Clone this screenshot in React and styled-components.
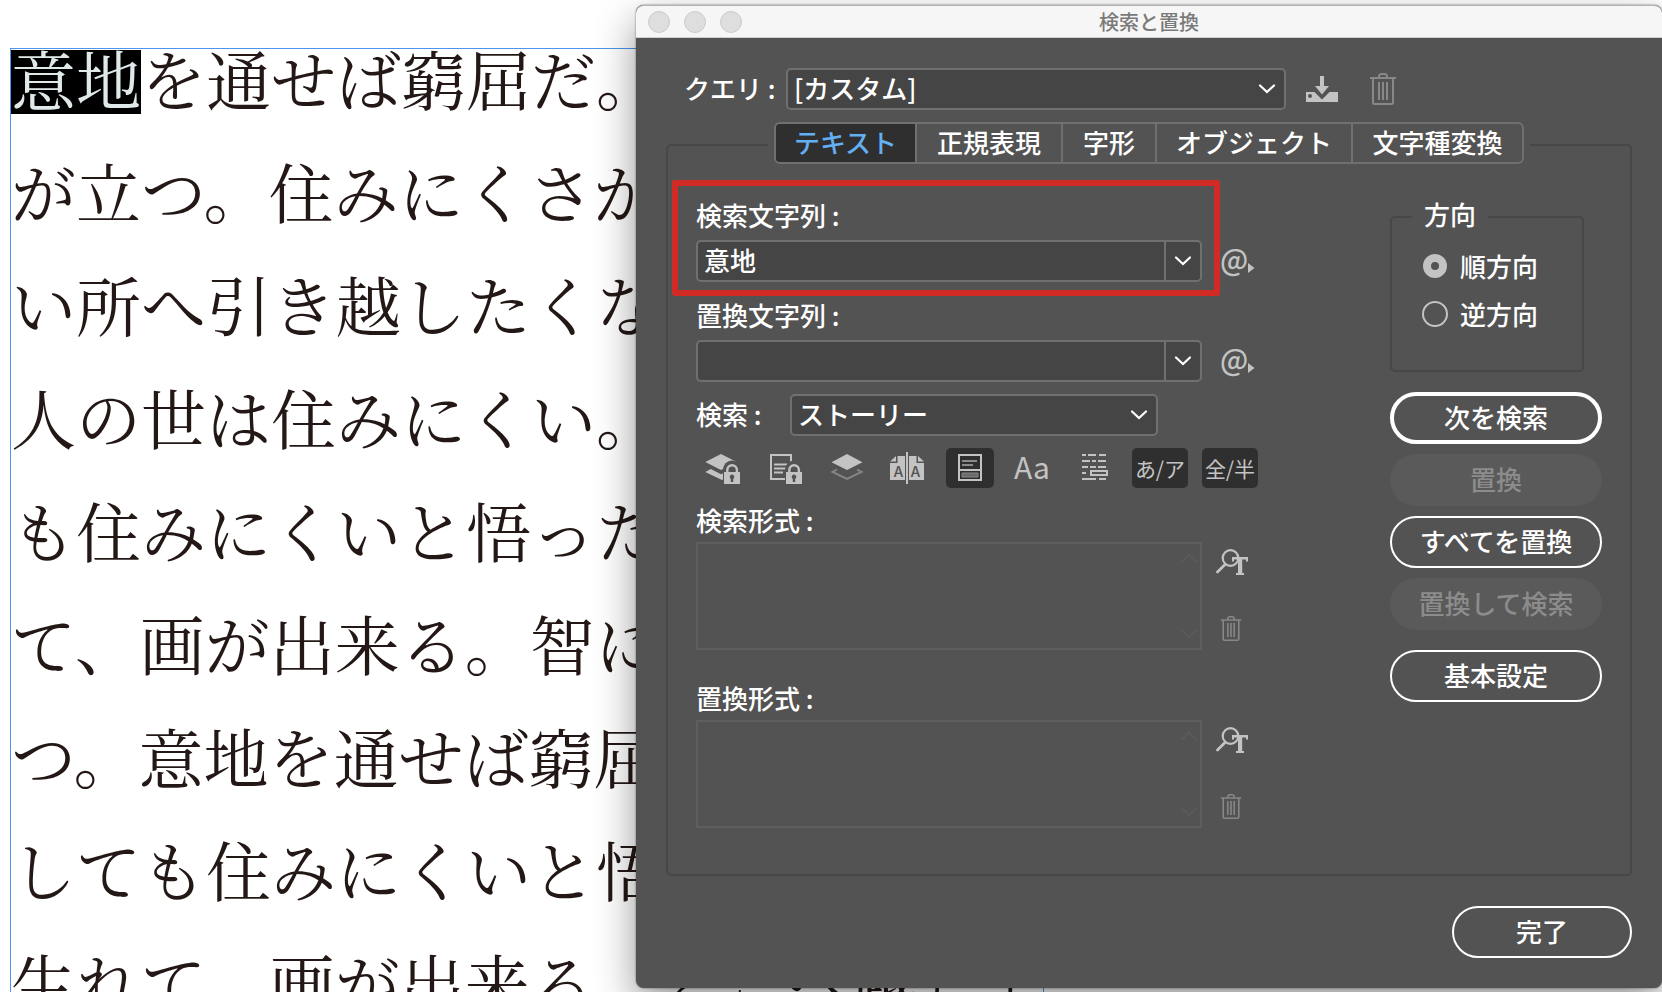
import React from "react";
import styled, { createGlobalStyle } from "styled-components";

const color = {
  panel: "#535353",
  field: "#454545",
  fieldBorder: "#707070",
  groove: "#474747",
  pressed: "#2f2f2f",
  icon: "#c3c3c3",
  dim: "#888888",
  text: "#ffffff",
  accent: "#64aef2",
  callout: "#d22b26",
};

const GlobalStyle = createGlobalStyle`
  *, *::before, *::after { box-sizing: border-box; }
  body { margin: 0; background: #fff; }
  button, input, select, textarea { font: inherit; color: inherit; }
`;

const Desktop = styled.main`
  position: relative;
  height: 100vh;
  overflow: hidden;
  padding: 48px 10px 0;
  font-family: "Noto Sans CJK JP", sans-serif;
`;

/* Document behind the dialog */
const TextFrame = styled.article`
  width: 1034px;
  border: 1px solid #4d95ea;
  border-bottom: 0;
  padding-top: 1px;
  color: #231815;
  font-family: "Noto Serif CJK JP", "Noto Sans CJK JP", serif;
  font-weight: 400;
  font-size: 65px;
`;

const Line = styled.p`
  display: flex;
  margin: 0;
  height: 113px;
  line-height: 54px;
  white-space: nowrap;
`;

const Selected = styled.mark`
  height: 64px;
  background: #000;
  color: #dfe9ea;
`;

/* Dialog window */
const Dialog = styled.section`
  position: absolute;
  top: 5px;
  left: 636px;
  right: 0;
  border-radius: 8px;
  background: ${color.panel};
  color: ${color.text};
  font-size: 26px;
  font-weight: 500;
  line-height: 34px;
  box-shadow: 0 16px 40px rgba(0, 0, 0, 0.42), 0 0 2px rgba(0, 0, 0, 0.6);
`;

const TitleBar = styled.header`
  display: grid;
  grid-template-columns: 1fr auto 1fr;
  align-items: center;
  height: 33px;
  padding: 0 12px;
  border-top: 1px solid #b4b4b4;
  border-bottom: 1px solid #d0d0d0;
  border-radius: 8px 8px 0 0;
  background: #f6f6f6;
`;

const WindowControls = styled.div`
  display: flex;
  gap: 14px;
`;

const WindowDot = styled.button`
  width: 22px;
  height: 22px;
  padding: 0;
  border: 1px solid #cbcbcb;
  border-radius: 50%;
  background: #dedede;
`;

const Title = styled.h1`
  margin: 0;
  color: #7a7a7a;
  font-size: 20px;
  font-weight: 500;
  line-height: 30px;
`;

const Body = styled.form`
  padding: 30px;
`;

const QueryRow = styled.div`
  display: flex;
  align-items: center;
  margin-bottom: 12px;
  padding: 0 236px 0 18px;
`;

const FieldLabel = styled.label`
  flex: none;
  display: block;
  width: ${(p) => p.$width || "auto"};
  padding-bottom: 2px;
`;

const SelectBox = styled.div`
  position: relative;
  display: flex;
  flex: ${(p) => (p.$width ? "none" : 1)};
  width: ${(p) => p.$width || "auto"};
`;

const Select = styled.select`
  appearance: none;
  width: 100%;
  height: 42px;
  padding: 0 40px 2px 6px;
  border: 2px solid ${color.fieldBorder};
  border-radius: 5px;
  background: ${color.field};
  line-height: 34px;
`;

const SelectArrow = styled.span`
  position: absolute;
  top: 0;
  right: 10px;
  display: flex;
  align-items: center;
  height: 42px;
  pointer-events: none;
`;

const IconButton = styled.button`
  display: flex;
  align-items: center;
  justify-content: center;
  flex: none;
  padding: 0;
  border: 0;
  background: none;
  color: ${(p) => (p.disabled ? color.dim : color.icon)};
  margin-left: ${(p) => p.$gap || "0"};
`;

const Panel = styled.fieldset`
  min-width: 0;
  margin: 0;
  padding: 12px 0 46px;
  border: 2px solid ${color.groove};
  border-radius: 5px;
`;

const TabLegend = styled.legend`
  margin: 0 auto;
  padding: 0 6px 4px;
`;

const TabList = styled.div`
  display: flex;
  height: 42px;
  border: 2px solid ${color.fieldBorder};
  border-radius: 6px;
  overflow: hidden;
`;

const Tab = styled.button`
  width: ${(p) => p.$width}px;
  padding: 0 0 2px;
  border: 0;
  background: ${(p) => (p.$active ? color.pressed : "transparent")};
  color: ${(p) => (p.$active ? color.accent : color.text)};

  & + & {
    border-left: 2px solid ${color.fieldBorder};
  }
`;

const Columns = styled.div`
  display: grid;
  grid-template-columns: minmax(0, 1fr) 212px;
  column-gap: 132px;
  padding: 0 28px 0 4px;
`;

const Criteria = styled.div`
  display: flex;
  flex-direction: column;
`;

const CalloutRow = styled.div`
  display: grid;
  grid-template-columns: minmax(0, 1fr) 38px;
  align-items: end;
`;

const Callout = styled.div`
  padding: 12px 12px 8px 18px;
  border: 6px solid ${color.callout};
  border-radius: 3px;
`;

const FieldBlock = styled.div`
  display: grid;
  row-gap: 6px;
`;

const SideRow = styled.div`
  display: grid;
  grid-template-columns: minmax(0, 1fr) 56px;
  align-items: end;
  padding: 2px 0 0 24px;
`;

const Combo = styled.div`
  display: flex;
  height: 42px;
  border: 2px solid ${color.fieldBorder};
  border-radius: 5px;
  background: ${color.field};
  overflow: hidden;
`;

const ComboInput = styled.input`
  flex: 1;
  min-width: 0;
  padding: 0 6px 2px;
  border: 0;
  background: transparent;
  outline: 0;
`;

const ComboButton = styled.button`
  display: flex;
  align-items: center;
  justify-content: center;
  width: 36px;
  padding: 0;
  border: 0;
  border-left: 2px solid ${color.fieldBorder};
  background: transparent;
`;

const SpecialButton = styled.button`
  display: flex;
  align-items: center;
  height: 42px;
  margin-bottom: ${(p) => (p.$inCallout ? "14px" : "0")};
  margin-left: ${(p) => (p.$inCallout ? "0" : "18px")};
  padding: 0 0 6px;
  border: 0;
  background: none;
  color: ${color.icon};
  font-size: 29px;
`;

const ScopeRow = styled.div`
  display: flex;
  align-items: center;
  margin-top: 12px;
  padding-left: 24px;
`;

const Toolbar = styled.div`
  display: flex;
  gap: 14px;
  margin-top: 12px;
  padding-left: 26px;
`;

const Toggle = styled.button`
  display: flex;
  align-items: center;
  justify-content: center;
  flex: none;
  width: ${(p) => (p.$wide ? "56px" : "48px")};
  height: 40px;
  padding: ${(p) => (p.$large ? "0 0 4px" : "0")};
  border: 0;
  border-radius: 5px;
  background: ${(p) => (p["aria-pressed"] ? color.pressed : "transparent")};
  color: ${color.icon};
  font-size: ${(p) => (p.$large ? "30px" : "21px")};
  font-weight: 400;
  white-space: nowrap;
`;

const FormatBlock = styled.section`
  display: grid;
  grid-template-columns: minmax(0, 1fr) 42px;
  gap: 4px 14px;
  margin-top: ${(p) => p.$top};
  padding-left: 24px;
`;

const FormatTitle = styled.h2`
  grid-column: 1 / -1;
  height: 34px;
  margin: 0;
  font-size: 26px;
  font-weight: 500;
  line-height: 32px;
`;

const FormatBox = styled.div`
  display: flex;
  flex-direction: column;
  justify-content: space-between;
  align-items: flex-end;
  height: 108px;
  padding: 8px 2px;
  border: 2px solid #5e5e5e;
  color: #5a5a5a;
`;

const FormatActions = styled.div`
  display: flex;
  flex-direction: column;
  align-items: flex-start;
  justify-content: space-between;
  padding: 7px 0 9px;
`;

const Actions = styled.div`
  padding-top: 18px;
`;

const Direction = styled.fieldset`
  min-width: 0;
  margin: 0 18px 20px 0;
  padding: 6px 20px 32px;
  border: 2px solid ${color.groove};
  border-radius: 5px;
`;

const DirectionLegend = styled.legend`
  height: 38px;
  padding: 0 12px;
  line-height: 32px;
`;

const RadioRow = styled.label`
  display: flex;
  align-items: center;
  gap: 12px;
  height: 48px;
  padding-left: 10px;
  white-space: nowrap;
`;

const Radio = styled.input`
  appearance: none;
  width: 26px;
  height: 26px;
  margin: 0;
  border: 2px solid ${color.icon};
  border-radius: 50%;

  &:checked {
    width: 24px;
    height: 24px;
    margin: 1px;
    border-width: 8px;
  }
`;

const ButtonStack = styled.div`
  display: grid;
  gap: 10px;
`;

const PillButton = styled.button`
  width: ${(p) => p.$width || "100%"};
  height: 52px;
  margin-top: ${(p) => (p.$apart ? "10px" : "0")};
  padding: 0 0 2px;
  border: ${(p) => (p.$primary ? "4px" : "2px")} solid #fff;
  border-radius: 26px;
  background: transparent;
  color: ${color.text};

  &:disabled {
    border-color: transparent;
    background: #5a5a5a;
    color: #8c8c8c;
  }
`;

const Footer = styled.footer`
  display: flex;
  justify-content: flex-end;
  margin-top: 30px;
`;

/* Icons */
const Chevron = ({ up }) => (
  <svg width="18" height="12" viewBox="0 0 18 12" fill="none" stroke="currentColor" strokeWidth="2.2" strokeLinecap="round">
    <path d={up ? "M2 9.5 9 2.5l7 7" : "M2 2.5l7 6.5 7-6.5"} />
  </svg>
);

const SaveIcon = () => (
  <svg width="32" height="28" viewBox="0 0 32 28" fill="currentColor">
    <path fillRule="evenodd" d="M0 17h8.5L16 24.500 23.500 17H32v10H0zM4 19a2 2 0 1 0 0 4 2 2 0 0 0 0-4z" />
    <path d="M14 1h4v10h5L16 19.500 9 11h5z" />
  </svg>
);

const TrashIcon = ({ width = 26, height = 32 }) => (
  <svg width={width} height={height} viewBox="0 0 26 32" fill="none" stroke="currentColor" strokeWidth="2">
    <path d="M0 5h26M9 5V3.5Q9 1 11.500 1h3Q17 1 17 3.500V5M3 5v24.500Q3 31 4.500 31h17q1.500 0 1.500-1.500V5M9 9v18M13 9v18M17 9v18" />
  </svg>
);

const FindTypeIcon = () => (
  <svg width="32" height="28" viewBox="0 0 32 28" fill="none">
    <circle cx="14.500" cy="9" r="7.800" stroke="currentColor" strokeWidth="2.200" />
    <path d="M9 15.500 1.500 23" stroke="currentColor" strokeWidth="2.800" strokeLinecap="round" />
    <path d="M16 8h16v4.500h-2V10.500h-3.800V24H28v2h-8v-2h2V10.500h-4v2h-2z" fill="currentColor" />
  </svg>
);

const Lock = () => (
  <g>
    <path d="M25 23v-1.500a8.500 8.500 0 0 1 18 0V23z" fill={color.panel} />
    <rect x="25" y="22.500" width="18" height="15" fill={color.panel} />
    <path d="M29.300 25v-3a4.800 4.800 0 0 1 9.600 0v3" fill="none" stroke="currentColor" strokeWidth="2.400" />
    <rect x="26" y="24" width="16" height="12" fill="currentColor" />
    <path d="M34 26.500a2.400 2.400 0 0 1 1.200 4.400V34h-2.400v-3.100a2.400 2.400 0 0 1 1.200-4.400z" fill={color.panel} />
  </g>
);

const LockedLayersIcon = () => (
  <svg width="48" height="40" viewBox="0 0 48 40" fill="currentColor">
    <path d="M7.300 14 23 6l15.700 8L23 22zM7.300 24l5.500-3L23 26.200l3-1.400V31l-2 1z" />
    <Lock />
  </svg>
);

const LockedStoryIcon = () => (
  <svg width="48" height="40" viewBox="0 0 48 40">
    <path d="M26 31H11V7h20v12M14 16.500h14M14 20.500h12M14 24.500h9" fill="none" stroke="currentColor" strokeWidth="2" />
    <Lock />
  </svg>
);

const HiddenLayersIcon = () => (
  <svg width="48" height="40" viewBox="0 0 48 40">
    <path d="M15 21.500 10.500 24 25 31l14.500-7-4.500-2.500" fill="none" stroke="#858585" strokeWidth="2" />
    <path d="M9.500 14.200 25 6l15.500 8.200L25 22z" fill="currentColor" />
  </svg>
);

const MasterPagesIcon = () => (
  <svg width="48" height="40" viewBox="0 0 48 40" fill="currentColor">
    <path d="M13.500 8H21v24H6V15h7.500zM12 8v5.500H6zM32.500 8H25v24h15V15h-7.500zM34 8v5.500h6zM22 4h2v32h-2z" />
    <g fill={color.panel} fontSize="15" fontWeight="500" textAnchor="middle">
      <text x="14.500" y="28.500">A</text>
      <text x="31.500" y="28.500">A</text>
    </g>
  </svg>
);

const FootnotesIcon = () => (
  <svg width="48" height="40" viewBox="0 0 48 40" fill="none" stroke="currentColor" strokeWidth="2">
    <path d="M13 7h22v25H13zM13 22h22" />
    <path d="M16 13h15M16 17h11" stroke="#8a8a8a" />
    <path d="M16 25h16v4H16z" fill="#6a6a6a" stroke="#8a8a8a" strokeWidth="1" />
  </svg>
);

const KanaWidthIcon = () => (
  <svg width="48" height="40" viewBox="0 0 48 40" fill="none" stroke="currentColor" strokeWidth="2">
    <path d="M12 7h4M18 7h8M29 7h7M12 13h8M22 13h4M28 13h8M12 19h6M20 19h6M28 19h8M12 25h4M12 31h14M29 31h7M21 23h16v4H21z" />
  </svg>
);

const SmallTriangle = () => (
  <svg width="7" height="30" viewBox="0 0 7 30" fill="currentColor">
    <path d="M0 20l6.500 5L0 30z" />
  </svg>
);

const lines = [
  "を通せば窮屈だ。どこへ越して",
  "が立つ。住みにくさが高じると、安",
  "い所へ引き越したくなる。とかくに",
  "人の世は住みにくい。どこへ越して",
  "も住みにくいと悟った時、詩が生れ",
  "て、画が出来る。智に働けば角が立",
  "つ。意地を通せば窮屈だ。どこへ越",
  "しても住みにくいと悟った時、詩が",
  "生れて、画が出来る。どこへ越して",
];

const tabs = [
  { name: "テキスト", width: 139 },
  { name: "正規表現", width: 146 },
  { name: "字形", width: 94 },
  { name: "オブジェクト", width: 196 },
  { name: "文字種変換", width: 171 },
];

function ComboField({ id, label, value }) {
  return (
    <FieldBlock>
      <FieldLabel htmlFor={id}>{label}</FieldLabel>
      <Combo>
        <ComboInput id={id} type="text" defaultValue={value} />
        <ComboButton type="button" aria-label="履歴">
          <Chevron />
        </ComboButton>
      </Combo>
    </FieldBlock>
  );
}

function SpecialCharacters({ inCallout }) {
  return (
    <SpecialButton type="button" aria-label="特殊文字" $inCallout={inCallout}>
      @<SmallTriangle />
    </SpecialButton>
  );
}

function FormatSettings({ title, top }) {
  return (
    <FormatBlock $top={top}>
      <FormatTitle>{title}</FormatTitle>
      <FormatBox>
        <Chevron up />
        <Chevron />
      </FormatBox>
      <FormatActions>
        <IconButton type="button" aria-label="属性を指定">
          <FindTypeIcon />
        </IconButton>
        <IconButton type="button" aria-label="属性を消去" disabled $gap="4px">
          <TrashIcon width={22} height={25} />
        </IconButton>
      </FormatActions>
    </FormatBlock>
  );
}

export default function App() {
  return (
    <Desktop>
      <GlobalStyle />
      <TextFrame>
        {lines.map((line, i) => (
          <Line key={i}>
            {i === 0 && <Selected>意地</Selected>}
            <span>{line}</span>
          </Line>
        ))}
      </TextFrame>

      <Dialog role="dialog" aria-labelledby="dialog-title">
        <TitleBar>
          <WindowControls>
            <WindowDot type="button" aria-label="閉じる" />
            <WindowDot type="button" aria-label="しまう" />
            <WindowDot type="button" aria-label="拡大" />
          </WindowControls>
          <Title id="dialog-title">検索と置換</Title>
        </TitleBar>

        <Body onSubmit={(e) => e.preventDefault()}>
          <QueryRow>
            <FieldLabel htmlFor="query" $width="102px">クエリ :</FieldLabel>
            <SelectBox>
              <Select id="query" defaultValue="custom">
                <option value="custom">[カスタム]</option>
              </Select>
              <SelectArrow><Chevron /></SelectArrow>
            </SelectBox>
            <IconButton type="button" aria-label="クエリを保存" $gap="20px">
              <SaveIcon />
            </IconButton>
            <IconButton type="button" aria-label="クエリを削除" disabled $gap="32px">
              <TrashIcon />
            </IconButton>
          </QueryRow>

          <Panel>
            <TabLegend>
              <TabList role="tablist">
                {tabs.map((tab, i) => (
                  <Tab key={tab.name} type="button" role="tab" aria-selected={i === 0} $active={i === 0} $width={tab.width}>
                    {tab.name}
                  </Tab>
                ))}
              </TabList>
            </TabLegend>

            <Columns>
              <Criteria>
                <CalloutRow>
                  <Callout>
                    <ComboField id="find" label="検索文字列 :" value="意地" />
                  </Callout>
                  <SpecialCharacters inCallout />
                </CalloutRow>

                <SideRow>
                  <ComboField id="replace" label="置換文字列 :" value="" />
                  <SpecialCharacters />
                </SideRow>

                <ScopeRow>
                  <FieldLabel htmlFor="scope" $width="94px">検索 :</FieldLabel>
                  <SelectBox $width="368px">
                    <Select id="scope" defaultValue="story">
                      <option value="story">ストーリー</option>
                    </Select>
                    <SelectArrow><Chevron /></SelectArrow>
                  </SelectBox>
                </ScopeRow>

                <Toolbar>
                  <Toggle type="button" aria-label="ロックされたレイヤー"><LockedLayersIcon /></Toggle>
                  <Toggle type="button" aria-label="ロックされたストーリー"><LockedStoryIcon /></Toggle>
                  <Toggle type="button" aria-label="非表示レイヤー"><HiddenLayersIcon /></Toggle>
                  <Toggle type="button" aria-label="マスターページ"><MasterPagesIcon /></Toggle>
                  <Toggle type="button" aria-label="脚注" aria-pressed={true}><FootnotesIcon /></Toggle>
                  <Toggle type="button" $large>Aa</Toggle>
                  <Toggle type="button" aria-label="単語単位"><KanaWidthIcon /></Toggle>
                  <Toggle type="button" aria-pressed={true} $wide>あ/ア</Toggle>
                  <Toggle type="button" aria-pressed={true} $wide>全/半</Toggle>
                </Toolbar>

                <FormatSettings title="検索形式 :" top="16px" />
                <FormatSettings title="置換形式 :" top="32px" />
              </Criteria>

              <Actions>
                <Direction>
                  <DirectionLegend>方向</DirectionLegend>
                  <RadioRow>
                    <Radio type="radio" name="direction" defaultChecked />
                    順方向
                  </RadioRow>
                  <RadioRow>
                    <Radio type="radio" name="direction" />
                    逆方向
                  </RadioRow>
                </Direction>
                <ButtonStack>
                  <PillButton type="submit" $primary>次を検索</PillButton>
                  <PillButton type="button" disabled>置換</PillButton>
                  <PillButton type="button">すべてを置換</PillButton>
                  <PillButton type="button" disabled>置換して検索</PillButton>
                  <PillButton type="button" $apart>基本設定</PillButton>
                </ButtonStack>
              </Actions>
            </Columns>
          </Panel>

          <Footer>
            <PillButton type="button" $width="180px">完了</PillButton>
          </Footer>
        </Body>
      </Dialog>
    </Desktop>
  );
}
